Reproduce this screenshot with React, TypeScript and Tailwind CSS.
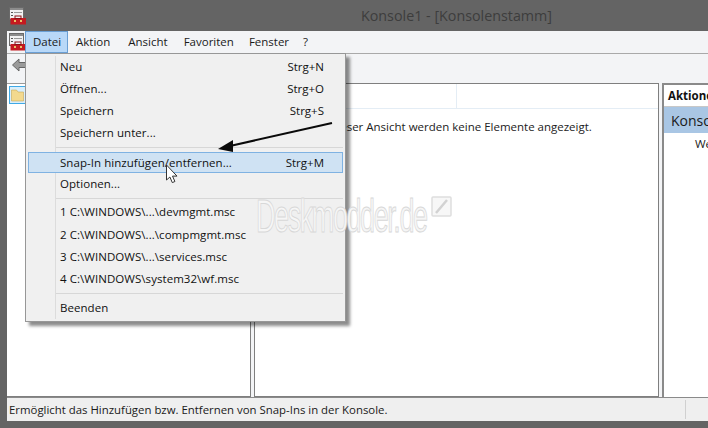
import React from 'react';

const font = { fontFamily: '"Open Sans", "Noto Sans", sans-serif' };

const ConsoleIcon: React.FC = () => (
  <svg width="18" height="18" viewBox="0 0 18 18">
    <rect x="0.5" y="0.5" width="14" height="12" fill="#f2f2f2" stroke="#6a6a6a" />
    <rect x="1" y="1" width="13" height="2" fill="#8c8c8c" />
    <rect x="2" y="5" width="2" height="1" fill="#555" />
    <rect x="2" y="8" width="2" height="1" fill="#555" />
    <rect x="5" y="5" width="8" height="1" fill="#9a9a9a" />
    <path d="M1.5 11h15.5v6.5H1.5z" fill="#c41a20" />
    <rect x="6" y="9" width="6" height="2.5" fill="none" stroke="#8c1014" />
    <rect x="5" y="13" width="2" height="2" fill="#e9c36a" />
    <rect x="11" y="13" width="2" height="2" fill="#e9c36a" />
  </svg>
);

type Row = { label: string; key?: string; active?: boolean; nudge?: boolean } | 'sep';

const rows: Row[] = [
  { label: 'Neu', key: 'Strg+N' },
  { label: 'Öffnen...', key: 'Strg+O' },
  { label: 'Speichern', key: 'Strg+S' },
  { label: 'Speichern unter...' },
  'sep',
  { label: 'Snap-In hinzufügen/entfernen...', key: 'Strg+M', active: true },
  { label: 'Optionen...' },
  'sep',
  { label: '1 C:\\WINDOWS\\...\\devmgmt.msc' },
  { label: '2 C:\\WINDOWS\\...\\compmgmt.msc', nudge: true },
  { label: '3 C:\\WINDOWS\\...\\services.msc' },
  { label: '4 C:\\WINDOWS\\system32\\wf.msc' },
  'sep',
  { label: 'Beenden', nudge: true },
];

const FileMenu: React.FC = () => (
  <div className="absolute left-[25px] top-[53px] w-[321px] h-[269px] bg-[#f0f0f0] border border-[#979797] shadow-[4px_4px_3px_rgba(0,0,0,0.45)] pt-[2px] px-[2px]">
    <div className="absolute left-[29px] top-[2px] bottom-[2px] w-px bg-[#dcdcdc]" />
    {rows.map((row, i) =>
      row === 'sep' ? (
        <div key={i} className="h-[6px] ml-[28px] flex items-center">
          <div className="w-full h-px bg-[#d7d7d7]" />
        </div>
      ) : (
        <div
          key={i}
          className={`relative flex items-center justify-between pl-[32px] pr-[19px] text-[11.5px] text-[#111] ${
            row.active ? 'h-[21px] bg-[#cfe2f3] outline outline-[#7fb2e2] -outline-offset-1 mt-[2px]' : 'h-[22px]'
          } ${row.nudge ? 'mt-px' : ''}`}
        >
          <span className="tracking-[0.05px]">{row.label}</span>
          {row.key && <span>{row.key}</span>}
        </div>
      )
    )}
  </div>
);

export default function App() {
  return (
    <div className="relative w-[708px] h-[428px] overflow-hidden bg-[#646464] flex flex-col" style={font}>
      <div className="h-[31px] flex items-center pl-[9px] shrink-0">
        <ConsoleIcon />
        <span className="ml-[334px] text-[14.3px] text-[#3d3d3d]">Konsole1 - [Konsolenstamm]</span>
      </div>

      <div className="ml-[7px] flex-1 flex flex-col bg-[#f3f4f6] min-h-0">
        <div className="h-[22px] flex items-center text-[11.5px] text-[#1a1a1a] shrink-0 border-b border-[#a9a9a9] box-content">
          <div className="w-[18px] pl-[2px] shrink-0"><ConsoleIcon /></div>
          <div className="h-[22px] w-[43px] pl-[1px] flex items-center justify-center bg-[#b8d8f8] border border-[#6a9fd4]">Datei</div>
          <div className="flex ml-[8px]">
            <span>Aktion</span>
            <span className="ml-[18px]">Ansicht</span>
            <span className="ml-[16px]">Favoriten</span>
            <span className="ml-[15px]">Fenster</span>
            <span className="ml-[14px]">?</span>
          </div>
        </div>

        <div className="h-[22px] flex items-center pl-[5px] shrink-0">
          <svg width="14" height="14" viewBox="0 0 14 14">
            <path d="M7 1 0.5 7 7 13V9.5h6.5v-5H7z" fill="#9a9a9a" stroke="#666" />
          </svg>
        </div>

        <div className="flex-1 mt-[7px] flex gap-[3px] min-h-0">
          <div className="w-[244px] bg-white border-r border-b border-[#7f7f7f] border-t border-t-[#9a9a9a] p-[2px]">
            <svg width="17" height="18" viewBox="0 0 17 18">
              <rect x="0.5" y="0.5" width="16" height="17" fill="#d9eefb" stroke="#3fa9e6" />
              <path d="M2.5 4h5l1.5 2h5.5v9h-12z" fill="#f3d98e" stroke="#c9a855" strokeWidth="0.6" />
            </svg>
          </div>
          <div className="w-[405px] bg-white border border-[#7f7f7f] flex flex-col">
            <div className="h-[25px] border-b border-[#e4edf5] flex shrink-0">
              <div className="w-[202px] border-r border-[#e4edf5]" />
            </div>
            <div className="pl-[62px] pt-[9px] text-[11.5px] text-[#222]">
              <span className="whitespace-nowrap">In dieser Ansicht werden keine Elemente angezeigt.</span>
            </div>
          </div>
          <div className="flex-1 bg-white border-l-2 border-t-2 border-[#8a8a8a] overflow-hidden whitespace-nowrap">
            <div className="h-[22px] flex items-center pl-[4px] text-[11.5px] font-bold text-[#111] border-b border-[#c8c8c8]">Aktionen</div>
            <div className="h-[26px] flex items-center pl-[7px] text-[14px] text-[#1a1a1a] bg-[#a9c6e4]">Konsolenstamm</div>
            <div className="pl-[31px] pt-[2px] text-[11.5px] text-[#222]">Weitere Aktionen</div>
          </div>
        </div>

        <div className="h-[24px] flex items-center pl-[2px] pt-px text-[11.4px] text-[#1a1a1a] bg-[#efefef] shrink-0 border-t border-[#8a8a8a] relative">
          Ermöglicht das Hinzufügen bzw. Entfernen von Snap-Ins in der Konsole.
          <div className="absolute left-[678px] top-[2px] bottom-[2px] w-px bg-[#d0d0d0]" />
        </div>
      </div>
      <div className="h-[7px] shrink-0" />

      <FileMenu />

      <div
        className="absolute left-[256px] top-[190px] text-[47px] leading-[52px] text-[#f6f6f6] tracking-[-2.5px] [-webkit-text-stroke:1px_#d8d8d8] scale-x-[0.575] origin-left whitespace-nowrap"
        style={{ fontFamily: '"Liberation Sans", sans-serif' }}
      >
        Deskmodder.de
      </div>
      <svg className="absolute left-[431px] top-[196px]" width="22" height="22" viewBox="0 0 22 22">
        <rect x="1" y="1" width="19" height="19" rx="1" fill="#f7f7f7" stroke="#dedede" strokeWidth="1.5" />
        <path d="M5 17 16 4" stroke="#d2d2d2" strokeWidth="2.5" />
      </svg>

      <svg className="absolute left-[216px] top-[120px]" width="120" height="34" viewBox="0 0 120 34">
        <path d="M116 3 14 26" stroke="#0a0a0a" strokeWidth="2" />
        <path d="M2 29 17 20 17 32z" fill="#0a0a0a" />
      </svg>

      <svg className="absolute left-[165px] top-[164px]" width="14" height="21" viewBox="0 0 14 21">
        <path d="M1.5 1v15l3.4-3 2.4 5.6 2.6-1.1-2.4-5.4H12z" fill="#fff" stroke="#333" strokeWidth="1" strokeLinejoin="round" />
      </svg>
    </div>
  );
}
